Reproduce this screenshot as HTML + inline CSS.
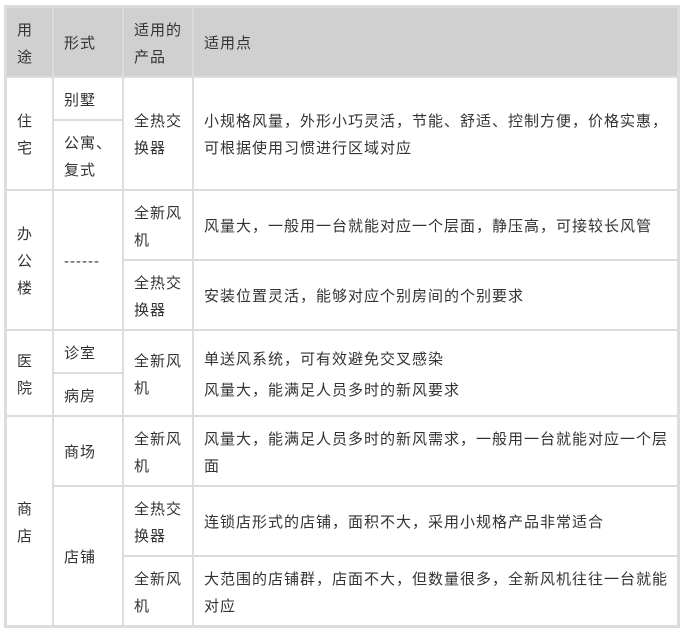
<!DOCTYPE html>
<html><head><meta charset="utf-8"><style>
body{margin:0;width:686px;height:632px;background:#fff;overflow:hidden}
.t{position:absolute;left:4px;top:5px;width:676px;height:623px;background:#dcdcdc}
.c{position:absolute;background:#fff;display:flex;align-items:center;box-sizing:border-box;padding-left:10px;padding-right:2px;padding-top:3px;font-family:"Liberation Sans","Noto Sans CJK SC",sans-serif;font-size:15px;letter-spacing:1px;line-height:27px;color:#333}
.h{background:#d0d0d0}
</style></head><body>
<div class="t"></div>
<div class="c h" style="left:7px;top:8px;width:45px;height:68px">用<br>途</div>
<div class="c h" style="left:54px;top:8px;width:68px;height:68px">形式</div>
<div class="c h" style="left:124px;top:8px;width:68px;height:68px">适用的<br>产品</div>
<div class="c h" style="left:194px;top:8px;width:483px;height:68px">适用点</div>

<div class="c" style="left:7px;top:78px;width:45px;height:111px">住<br>宅</div>
<div class="c" style="left:54px;top:78px;width:68px;height:41px">别墅</div>
<div class="c" style="left:54px;top:121px;width:68px;height:68px">公寓、<br>复式</div>
<div class="c" style="left:124px;top:78px;width:68px;height:111px">全热交<br>换器</div>
<div class="c" style="left:194px;top:78px;width:483px;height:111px">小规格风量，外形小巧灵活，节能、舒适、控制方便，价格实惠，<br>可根据使用习惯进行区域对应</div>

<div class="c" style="left:7px;top:191px;width:45px;height:138px">办<br>公<br>楼</div>
<div class="c" style="left:54px;top:191px;width:68px;height:138px">------</div>
<div class="c" style="left:124px;top:191px;width:68px;height:68px">全新风<br>机</div>
<div class="c" style="left:194px;top:191px;width:483px;height:68px">风量大，一般用一台就能对应一个层面，静压高，可接较长风管</div>
<div class="c" style="left:124px;top:261px;width:68px;height:68px">全热交<br>换器</div>
<div class="c" style="left:194px;top:261px;width:483px;height:68px">安装位置灵活，能够对应个别房间的个别要求</div>

<div class="c" style="left:7px;top:331px;width:45px;height:84px">医<br>院</div>
<div class="c" style="left:54px;top:331px;width:68px;height:41px">诊室</div>
<div class="c" style="left:54px;top:374px;width:68px;height:41px">病房</div>
<div class="c" style="left:124px;top:331px;width:68px;height:84px">全新风<br>机</div>
<div class="c" style="left:194px;top:331px;width:483px;height:84px;line-height:31px">单送风系统，可有效避免交叉感染<br>风量大，能满足人员多时的新风要求</div>

<div class="c" style="left:7px;top:417px;width:45px;height:208px">商<br>店</div>
<div class="c" style="left:54px;top:417px;width:68px;height:68px">商场</div>
<div class="c" style="left:54px;top:487px;width:68px;height:138px">店铺</div>
<div class="c" style="left:124px;top:417px;width:68px;height:68px">全新风<br>机</div>
<div class="c" style="left:194px;top:417px;width:483px;height:68px">风量大，能满足人员多时的新风需求，一般用一台就能对应一个层<br>面</div>
<div class="c" style="left:124px;top:487px;width:68px;height:68px">全热交<br>换器</div>
<div class="c" style="left:194px;top:487px;width:483px;height:68px">连锁店形式的店铺，面积不大，采用小规格产品非常适合</div>
<div class="c" style="left:124px;top:557px;width:68px;height:68px">全新风<br>机</div>
<div class="c" style="left:194px;top:557px;width:483px;height:68px">大范围的店铺群，店面不大，但数量很多，全新风机往往一台就能<br>对应</div>
</body></html>
